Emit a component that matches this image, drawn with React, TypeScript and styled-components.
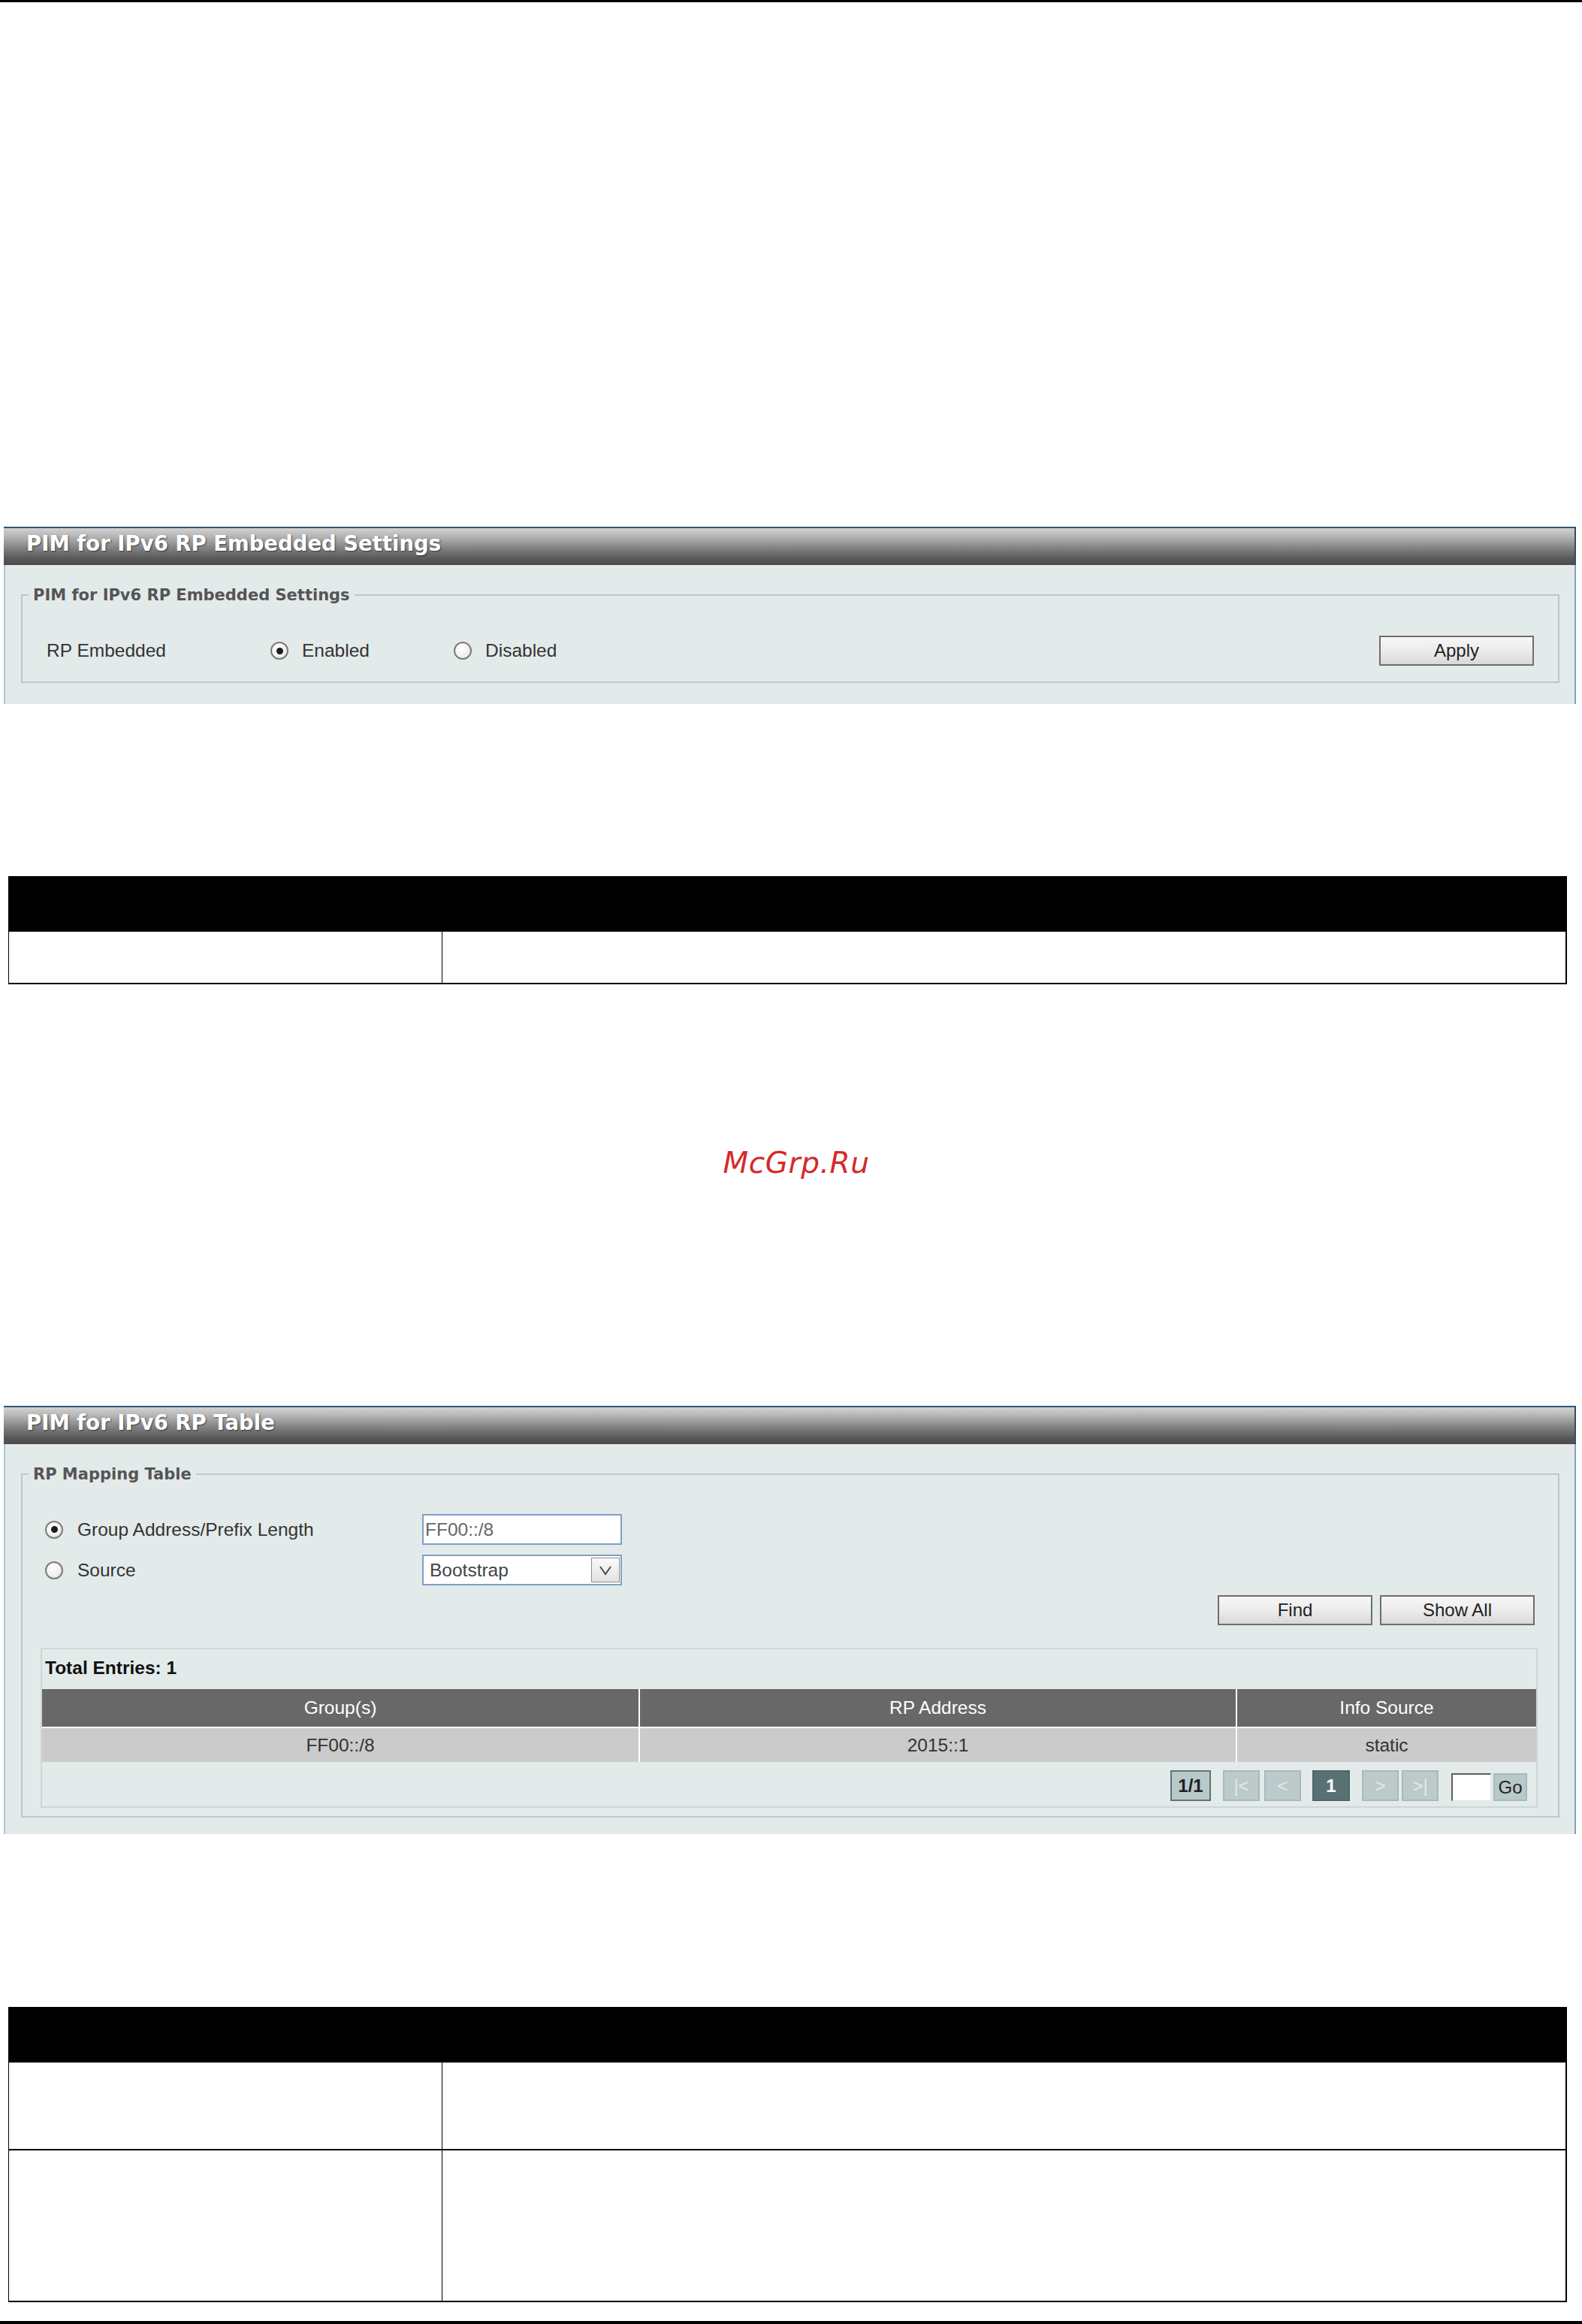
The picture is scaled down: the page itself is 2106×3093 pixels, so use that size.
import React from "react"
import styled, { createGlobalStyle } from "styled-components"

const GlobalStyle = createGlobalStyle`
  html, body {
    margin: 0;
    padding: 0;
    background: #fff;
  }
  body {
    font-family: "Liberation Sans", Arial, sans-serif;
    color: #333;
  }
  * {
    box-sizing: border-box;
  }
`

const Page = styled.div`
  width: 2106px;
  display: flex;
  flex-direction: column;
`

const Rule = styled.div<{ $h: number; $top?: number }>`
  height: ${({ $h }) => $h}px;
  margin-top: ${({ $top }) => $top || 0}px;
  background: #000;
`

const Panel = styled.section<{ $top: number }>`
  margin: ${({ $top }) => $top}px 8px 0 5px;
  display: flex;
  flex-direction: column;
`

const TitleBar = styled.div`
  height: 51px;
  line-height: 41px;
  padding: 0 0 8px 30px;
  border-top: 2px solid #2a587a;
  border-right: 2px solid #3b4c5a;
  background: linear-gradient(
    to bottom,
    #d2d2d2 0%,
    #b9b9b9 20%,
    #858585 52%,
    #595959 82%,
    #4b4b4b 100%
  );
  color: #fff;
  font-family: "DejaVu Sans", Verdana, sans-serif;
  font-weight: bold;
  font-size: 27.5px;
  text-shadow: 1px 1px 2px rgba(0, 0, 0, 0.55);
  white-space: nowrap;
`

const PanelBody = styled.div<{ $pb: number }>`
  background: #e3eaea;
  border-left: 2px solid #a9c6d6;
  border-right: 2px solid #7fa3ba;
  padding: 26px 20px ${({ $pb }) => $pb}px 21px;
`

const FieldSet = styled.fieldset`
  margin: 0;
  padding: 0;
  min-width: 0;
  border: 2px solid #bcc8ca;
`

const Legend = styled.legend`
  margin-left: 8px;
  padding: 0 6px;
  line-height: 28px;
  font-family: "DejaVu Sans", Verdana, sans-serif;
  font-weight: bold;
  font-size: 21px;
  color: #555;
`

const FieldBody = styled.div<{ $pt: number; $pb: number; $pl: number; $pr: number }>`
  display: flex;
  flex-direction: column;
  padding: ${({ $pt, $pr, $pb, $pl }) => `${$pt}px ${$pr}px ${$pb}px ${$pl}px`};
`

const SettingRow = styled.div`
  display: flex;
  align-items: center;
  height: 40px;
  font-size: 24.5px;
`

const FieldLabel = styled.span`
  width: 298px;
  color: #333;
`

const RadioOption = styled.label<{ $w?: number }>`
  display: flex;
  align-items: center;
  gap: 18px;
  width: ${({ $w }) => ($w ? `${$w}px` : "auto")};
  color: #333;
  font-size: 24.5px;
`

const Radio = styled.span<{ $checked?: boolean }>`
  position: relative;
  flex: none;
  width: 24px;
  height: 24px;
  border-radius: 50%;
  border: 2px solid #7c7c7c;
  background: radial-gradient(circle at 40% 35%, #ffffff 0%, #f1f1f1 55%, #d6d6d6 100%);

  &::after {
    content: "";
    display: ${({ $checked }) => ($checked ? "block" : "none")};
    position: absolute;
    left: 50%;
    top: 50%;
    width: 9px;
    height: 9px;
    margin: -4.5px 0 0 -4.5px;
    border-radius: 50%;
    background: #1c1c1c;
  }
`

const Spacer = styled.div`
  flex: 1;
`

const Button = styled.button`
  width: 206px;
  height: 40px;
  padding: 0;
  border: 2px solid #6e6e6e;
  background: linear-gradient(to bottom, #f7f7f7 0%, #ececec 50%, #d9d9d9 100%);
  font-family: "Liberation Sans", Arial, sans-serif;
  font-size: 24px;
  color: #222;
`

const ChoiceRow = styled.div<{ $top?: number }>`
  display: flex;
  align-items: center;
  height: 41px;
  margin-top: ${({ $top }) => $top || 0}px;
  padding-left: 6px;
`

const ChoiceLabel = styled.label`
  display: flex;
  align-items: center;
  gap: 19px;
  width: 502px;
  font-size: 24.5px;
  color: #333;
`

const TextBox = styled.input`
  width: 266px;
  height: 41px;
  padding: 0 0 0 2px;
  border: 2px solid #7f9fc4;
  background: #fff;
  font-family: "Liberation Sans", Arial, sans-serif;
  font-size: 24.5px;
  color: #666;
  outline: none;
`

const SelectBox = styled.div`
  display: flex;
  align-items: center;
  justify-content: space-between;
  width: 266px;
  height: 41px;
  padding: 0 1px 0 8px;
  border: 2px solid #7f9fc4;
  background: #fff;
  font-size: 24.5px;
  color: #444;
`

const SelectArrow = styled.span`
  display: flex;
  align-items: center;
  justify-content: center;
  width: 38px;
  height: 33px;
  border: 1px solid #8d8d8d;
  background: linear-gradient(to bottom, #fafafa, #e2e2e2);
`

const ButtonRow = styled.div`
  display: flex;
  justify-content: flex-end;
  gap: 10px;
  margin-top: 13px;
  padding-right: 4px;
`

const EntriesBox = styled.div`
  margin-top: 30px;
  border: 2px solid #cfd6d6;
  background: #e3eaea;
`

const TotalLine = styled.div`
  padding: 11px 4px 14px;
  line-height: 28px;
  font-size: 24.5px;
  font-weight: bold;
  color: #111;
`

const DataGrid = styled.div`
  display: grid;
  grid-template-columns: 794px 793px 1fr;
  gap: 2px;
  background: #fff;
`

const HeadCell = styled.div`
  height: 50px;
  display: flex;
  align-items: center;
  justify-content: center;
  background: #686868;
  color: #fff;
  font-size: 24.5px;
`

const DataCell = styled.div`
  height: 45px;
  display: flex;
  align-items: center;
  justify-content: center;
  background: #cbcbcb;
  color: #333;
  font-size: 24.5px;
`

const Pager = styled.div`
  display: flex;
  justify-content: flex-end;
  align-items: flex-end;
  padding: 11px 12px 7px;
`

const PageBtn = styled.span<{ $kind: "info" | "off" | "current" | "go"; $w: number; $gap: number }>`
  display: flex;
  align-items: center;
  justify-content: center;
  width: ${({ $w }) => $w}px;
  height: ${({ $kind }) => ($kind === "go" ? 37 : 41)}px;
  margin-left: ${({ $gap }) => $gap}px;
  font-size: 24px;
  font-weight: ${({ $kind }) => ($kind === "info" || $kind === "current" ? "bold" : "normal")};
  background: ${({ $kind }) => ($kind === "current" ? "#597173" : $kind === "off" ? "#bccacb" : "#b8c9ca")};
  border: 2px solid
    ${({ $kind }) =>
      $kind === "info" ? "#5f7373" : $kind === "current" ? "#4f6668" : "#a9b9ba"};
  color: ${({ $kind }) =>
    $kind === "current" ? "#fff" : $kind === "off" ? "#e3eaea" : "#222"};
`

const PageInput = styled.span`
  width: 53px;
  height: 37px;
  margin-left: 17px;
  background: #fff;
  border-top: 2px solid #5e5e5e;
  border-left: 2px solid #5e5e5e;
  border-right: 1px solid #e6e6e6;
  border-bottom: 1px solid #e6e6e6;
`

const Watermark = styled.div`
  margin-top: 214.5px;
  height: 46px;
  line-height: 46px;
  padding-left: 14px;
  text-align: center;
  font-family: "DejaVu Sans", Verdana, sans-serif;
  font-style: italic;
  font-size: 39px;
  letter-spacing: 0.6px;
  color: #d42a2a;
`

const DocTable = styled.div<{ $top: number }>`
  margin: ${({ $top }) => $top}px 0 0 11px;
  width: 2075px;
  display: grid;
  grid-template-columns: 577px 1fr;
  border-left: 1px solid #000;
  border-right: 2px solid #000;
`

const DocHead = styled.div`
  grid-column: 1 / -1;
  height: 74px;
  background: #000;
`

const DocCell = styled.div<{ $h: number; $first?: boolean }>`
  height: ${({ $h }) => $h}px;
  border-bottom: 2px solid #000;
  border-right: ${({ $first }) => ($first ? "1px solid #000" : "none")};
  background: #fff;
`

const Chevron = () => (
  <svg width="18" height="14" viewBox="0 0 18 14">
    <path d="M2 2 L9 12 L16 2" fill="none" stroke="#4a4a4a" strokeWidth="2" />
  </svg>
)

const App = () => {
  return (
    <Page>
      <GlobalStyle />
      <Rule $h={3} />

      <Panel $top={698}>
        <TitleBar>PIM for IPv6 RP Embedded Settings</TitleBar>
        <PanelBody $pb={28}>
          <FieldSet>
            <Legend>PIM for IPv6 RP Embedded Settings</Legend>
            <FieldBody $pt={40} $pb={21} $pl={32} $pr={32}>
              <SettingRow>
                <FieldLabel>RP Embedded</FieldLabel>
                <RadioOption $w={244}>
                  <Radio $checked />
                  Enabled
                </RadioOption>
                <RadioOption>
                  <Radio />
                  Disabled
                </RadioOption>
                <Spacer />
                <Button>Apply</Button>
              </SettingRow>
            </FieldBody>
          </FieldSet>
        </PanelBody>
      </Panel>

      <DocTable $top={229}>
        <DocHead />
        <DocCell $h={70} $first />
        <DocCell $h={70} />
      </DocTable>

      <Watermark>McGrp.Ru</Watermark>

      <Panel $top={300.5}>
        <TitleBar>PIM for IPv6 RP Table</TitleBar>
        <PanelBody $pb={22}>
          <FieldSet>
            <Legend>RP Mapping Table</Legend>
            <FieldBody $pt={39} $pb={11} $pl={24} $pr={27}>
              <ChoiceRow>
                <ChoiceLabel>
                  <Radio $checked />
                  Group Address/Prefix Length
                </ChoiceLabel>
                <TextBox readOnly value="FF00::/8" />
              </ChoiceRow>
              <ChoiceRow $top={13}>
                <ChoiceLabel>
                  <Radio />
                  Source
                </ChoiceLabel>
                <SelectBox>
                  Bootstrap
                  <SelectArrow>
                    <Chevron />
                  </SelectArrow>
                </SelectBox>
              </ChoiceRow>
              <ButtonRow>
                <Button>Find</Button>
                <Button>Show All</Button>
              </ButtonRow>
              <EntriesBox>
                <TotalLine>Total Entries: 1</TotalLine>
                <DataGrid>
                  <HeadCell>Group(s)</HeadCell>
                  <HeadCell>RP Address</HeadCell>
                  <HeadCell>Info Source</HeadCell>
                  <DataCell>FF00::/8</DataCell>
                  <DataCell>2015::1</DataCell>
                  <DataCell>static</DataCell>
                </DataGrid>
                <Pager>
                  <PageBtn $kind="info" $w={54} $gap={0}>1/1</PageBtn>
                  <PageBtn $kind="off" $w={49} $gap={16}>|&lt;</PageBtn>
                  <PageBtn $kind="off" $w={49} $gap={6}>&lt;</PageBtn>
                  <PageBtn $kind="current" $w={50} $gap={15}>1</PageBtn>
                  <PageBtn $kind="off" $w={49} $gap={16}>&gt;</PageBtn>
                  <PageBtn $kind="off" $w={49} $gap={4}>&gt;|</PageBtn>
                  <PageInput />
                  <PageBtn $kind="go" $w={45} $gap={3}>Go</PageBtn>
                </Pager>
              </EntriesBox>
            </FieldBody>
          </FieldSet>
        </PanelBody>
      </Panel>

      <DocTable $top={230}>
        <DocHead />
        <DocCell $h={117} $first />
        <DocCell $h={117} />
        <DocCell $h={202} $first />
        <DocCell $h={202} />
      </DocTable>

      <Rule $h={4} $top={25} />
    </Page>
  )
}

export default App
